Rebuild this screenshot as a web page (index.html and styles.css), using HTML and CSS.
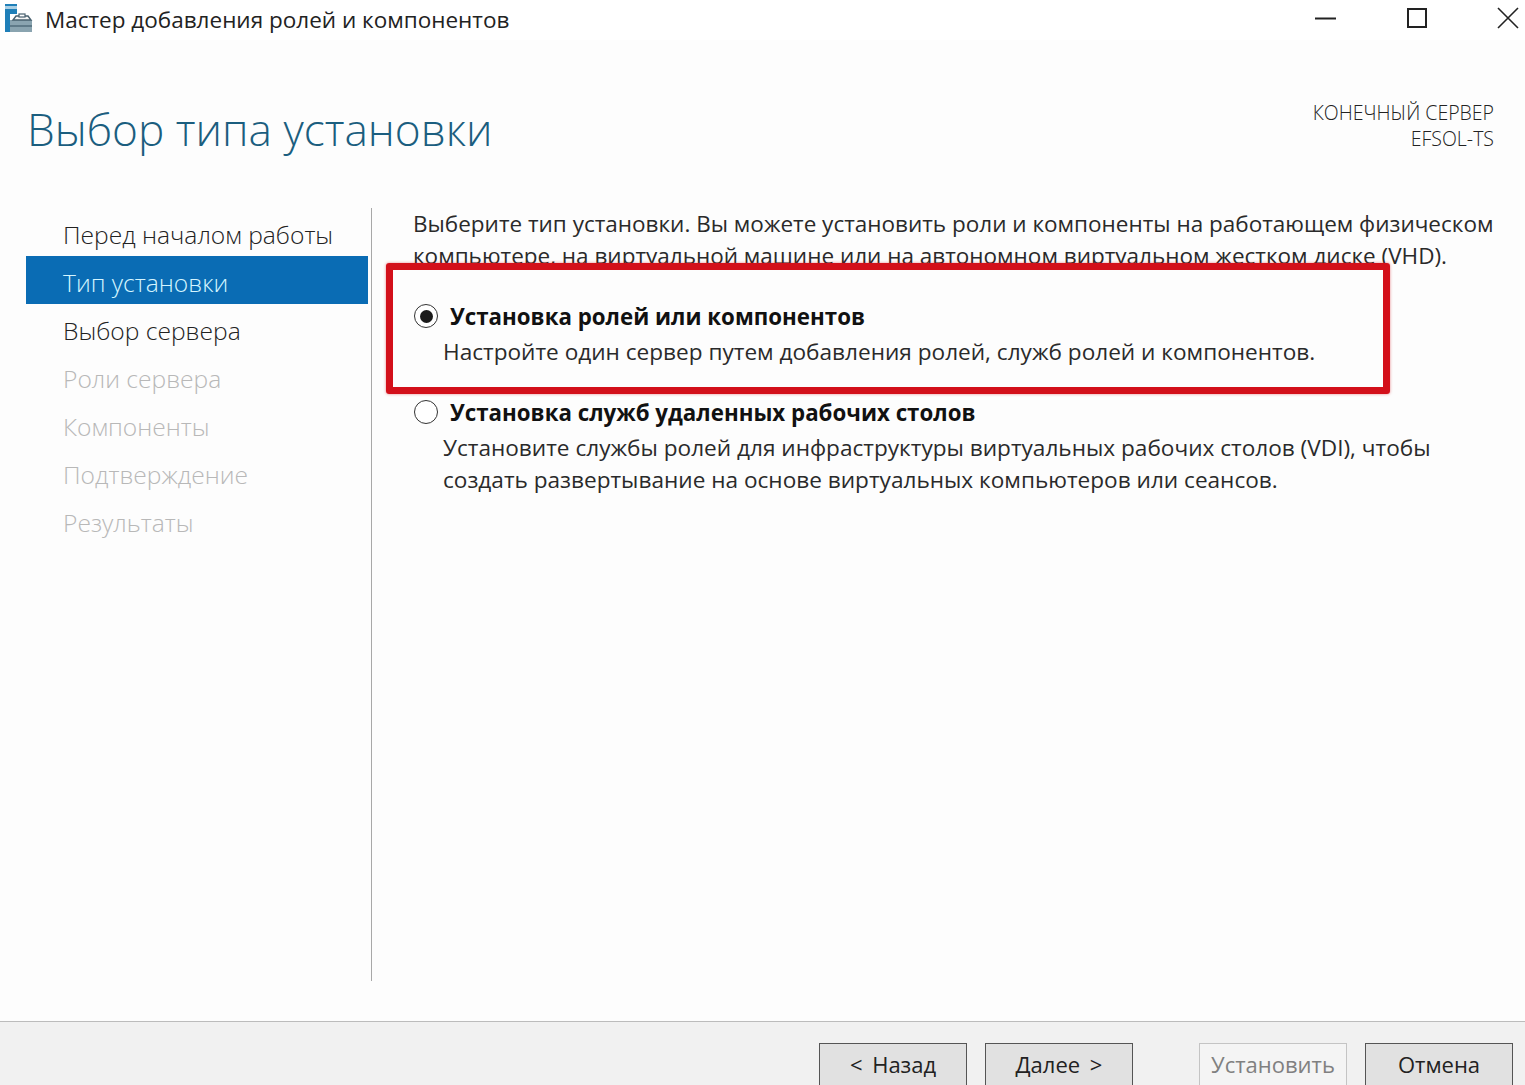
FILE: index.html
```html
<!DOCTYPE html>
<html>
<head>
  <meta charset="utf-8">
  <title>Мастер добавления ролей и компонентов</title>
  <link rel="stylesheet" href="styles.css">
</head>
<body>

  <div class="titlebar">
    <svg class="appicon" width="28" height="28" viewBox="0 0 28 28">
      <rect x="4" y="-2" width="12" height="2" fill="#1f7fb8"/>
      <rect x="4" y="0" width="12" height="3" fill="#a9cfe4"/>
      <rect x="4" y="3" width="12" height="5" fill="#1f7fb8"/>
      <rect x="4" y="8" width="5" height="18" fill="#1f7fb8"/>
      <rect x="9" y="14" width="22" height="12" fill="#8aa4b0"/>
      <rect x="9" y="19" width="22" height="2" fill="#5f7a88"/>
      <path d="M12 14 L15 10 H27 L30 14 Z" fill="#f4f4f4" stroke="#48606e" stroke-width="1.4"/>
      <rect x="18" y="8" width="6" height="3" fill="#fff" stroke="#48606e" stroke-width="1.2"/>
    </svg>
    <span class="wintitle">Мастер добавления ролей и компонентов</span>
    <div class="winbtns">
      <svg width="22" height="22" viewBox="0 0 22 22"><path d="M0 11.5 H21" stroke="#222" stroke-width="2"/></svg>
      <svg width="22" height="22" viewBox="0 0 22 22"><rect x="2" y="2" width="18" height="18" fill="none" stroke="#222" stroke-width="2"/></svg>
      <svg width="22" height="22" viewBox="0 0 22 22"><path d="M1 1 L21 21 M21 1 L1 21" stroke="#222" stroke-width="1.6"/></svg>
    </div>
  </div>

  <div class="header">
    <h1>Выбор типа установки</h1>
    <div class="target">
      <div>КОНЕЧНЫЙ СЕРВЕР</div>
      <div>EFSOL-TS</div>
    </div>
  </div>

  <div class="main">
    <ul class="steps">
      <li>Перед началом работы</li>
      <li class="active">Тип установки</li>
      <li>Выбор сервера</li>
      <li class="off">Роли сервера</li>
      <li class="off">Компоненты</li>
      <li class="off">Подтверждение</li>
      <li class="off">Результаты</li>
    </ul>

    <div class="content">
      <p class="intro">Выберите тип установки. Вы можете установить роли и компоненты на работающем физическом компьютере, на виртуальной машине или на автономном виртуальном жестком диске (VHD).</p>

      <div class="option first">
        <span class="radio checked"></span>
        <div class="option-text">
          <div class="option-title">Установка ролей или компонентов</div>
          <div class="option-desc">Настройте один сервер путем добавления ролей, служб ролей и компонентов.</div>
        </div>
      </div>

      <div class="option">
        <span class="radio"></span>
        <div class="option-text">
          <div class="option-title">Установка служб удаленных рабочих столов</div>
          <div class="option-desc">Установите службы ролей для инфраструктуры виртуальных рабочих столов (VDI), чтобы создать развертывание на основе виртуальных компьютеров или сеансов.</div>
        </div>
      </div>
    </div>
  </div>

  <div class="footer">
    <button class="btn">&lt; Назад</button>
    <button class="btn">Далее &gt;</button>
    <button class="btn disabled">Установить</button>
    <button class="btn">Отмена</button>
  </div>

  <div class="highlight"></div>

</body>
</html>
```

FILE: styles.css
```css
html, body {
  margin: 0;
  height: 1085px;
  overflow: hidden;
}
body {
  position: relative;
  display: flex;
  flex-direction: column;
  font-family: 'Open Sans', 'Liberation Sans', sans-serif;
  font-size: 23px;
  color: #1a1a1a;
  background-color: #fdfdfd;
}

/* title bar */
.titlebar {
  height: 40px;
  display: flex;
  align-items: center;
  padding-left: 1px;
  background-color: #fff;
}
.appicon {
  overflow: visible;
  margin-right: 16px;
}
.wintitle {
  font-size: 22.5px;
  margin-top: -2px;
  color: #222;
}
.winbtns {
  margin-left: auto;
  margin-right: 6px;
  display: flex;
  gap: 69px;
  margin-top: -4px;
}

/* header */
.header {
  height: 168px;
  display: flex;
  justify-content: space-between;
  padding: 0 31px 0 27px;
}
h1 {
  margin: 53px 0 0 0;
  font-size: 44.2px;
  line-height: 72px;
  font-weight: 300;
  color: #1b5e7f;
}
.target {
  margin-top: 60px;
  text-align: right;
  font-size: 19.5px;
  line-height: 26px;
  font-weight: 300;
  color: #222;
}

/* steps and content */
.main {
  flex: 1;
  display: flex;
  min-height: 0;
}
.steps {
  list-style: none;
  margin: 0 3px 0 26px;
  padding: 0;
  width: 342px;
}
.content {
  flex: 1;
  margin-bottom: 40px;
  padding: 0 28px 0 41px;
  border-left: 1px solid #a8a8a8;
}
.steps li {
  height: 48px;
  line-height: 54px;
  padding-left: 37px;
  font-size: 24.6px;
  font-weight: 300;
  color: #222;
}
.steps li.active {
  background-color: #0a6cb4;
  color: #d4f5ff;
}
.steps li.off {
  color: #b8b8b8;
}
.intro {
  margin: 0;
  font-size: 22.5px;
  line-height: 32px;
  color: #2a2a2a;
}
.option {
  display: flex;
  margin-top: 25px;
}
.radio {
  flex: none;
  width: 24px;
  height: 24px;
  margin: 7px 12px 0 1px;
  border: 1.5px solid #333;
  border-radius: 50%;
  box-sizing: border-box;
  background-color: #fff;
  display: flex;
  align-items: center;
  justify-content: center;
}
.radio.checked::before {
  content: "";
  width: 13px;
  height: 13px;
  border-radius: 50%;
  background-color: #1a1a1a;
}
.option-title {
  font-size: 22.3px;
  line-height: 39px;
  font-weight: 700;
  color: #111;
}
.option-desc {
  margin-left: -7px;
  font-size: 22.6px;
  line-height: 32px;
  color: #2a2a2a;
}

/* bottom buttons */
.footer {
  flex: none;
  height: 64px;
  border-top: 1px solid #bcbcbc;
  background-color: #f1f1f1;
  display: flex;
  justify-content: flex-end;
  padding: 21px 12px 0 0;
  box-sizing: border-box;
  overflow: hidden;
  gap: 18px;
}
.btn {
  width: 148px;
  height: 56px;
  flex: none;
  padding: 0 0 14px 0;
  border: 1px solid #555;
  background-color: #e1e1e1;
  font-family: inherit;
  font-size: 22px;
  word-spacing: 4px;
  color: #222;
}
.btn.disabled {
  margin-left: 48px;
  background-color: #f4f4f4;
  border-color: #c4c4c4;
  color: #808080;
}

/* red box drawn over the screenshot */
.highlight {
  position: absolute;
  left: 386px;
  top: 263px;
  width: 1004px;
  height: 131px;
  box-sizing: border-box;
  border: 7px solid #d3101a;
  border-radius: 3px;
  box-shadow: 0 0 3px rgba(211, 16, 26, 0.5);
}
```
